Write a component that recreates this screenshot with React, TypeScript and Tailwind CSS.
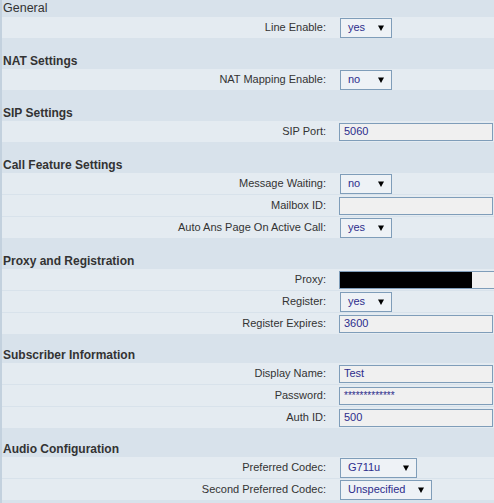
import React from "react";

type Field =
  | { label: string; kind: "select"; value: string; w: number }
  | { label: string; kind: "input"; value: string; w?: number; redact?: boolean; small?: boolean };

type Section = { title: string; spacer: number; bold: boolean; rows: Field[] };

const sections: Section[] = [
  { title: "General", spacer: 0, bold: false, rows: [{ label: "Line Enable:", kind: "select", value: "yes", w: 52 }] },
  { title: "NAT Settings", spacer: 13, bold: true, rows: [{ label: "NAT Mapping Enable:", kind: "select", value: "no", w: 52 }] },
  { title: "SIP Settings", spacer: 13, bold: true, rows: [{ label: "SIP Port:", kind: "input", value: "5060" }] },
  {
    title: "Call Feature Settings",
    spacer: 13,
    bold: true,
    rows: [
      { label: "Message Waiting:", kind: "select", value: "no", w: 52 },
      { label: "Mailbox ID:", kind: "input", value: "" },
      { label: "Auto Ans Page On Active Call:", kind: "select", value: "yes", w: 52 },
    ],
  },
  {
    title: "Proxy and Registration",
    spacer: 13,
    bold: true,
    rows: [
      { label: "Proxy:", kind: "input", value: "", w: 170, redact: true },
      { label: "Register:", kind: "select", value: "yes", w: 52 },
      { label: "Register Expires:", kind: "input", value: "3600" },
    ],
  },
  {
    title: "Subscriber Information",
    spacer: 11,
    bold: true,
    rows: [
      { label: "Display Name:", kind: "input", value: "Test" },
      { label: "Password:", kind: "input", value: "*************", small: true },
      { label: "Auth ID:", kind: "input", value: "500" },
    ],
  },
  {
    title: "Audio Configuration",
    spacer: 11,
    bold: true,
    rows: [
      { label: "Preferred Codec:", kind: "select", value: "G711u", w: 77 },
      { label: "Second Preferred Codec:", kind: "select", value: "Unspecified", w: 92 },
    ],
  },
];

function Arrow() {
  return (
    <svg width="6" height="6" viewBox="0 0 6 6" className="shrink-0">
      <polygon points="0,0.5 6,0.5 3,6" fill="#000" />
    </svg>
  );
}

function Control({ f }: { f: Field }) {
  if (f.kind === "select") {
    return (
      <div
        className="ml-[1px] flex h-[20px] items-center justify-between border border-[#7f9db9] bg-[#eef2f6] pl-[7px] pr-[7px] text-[11px] text-[#2d2d8c]"
        style={{ width: f.w }}
      >
        <span>{f.value}</span>
        <Arrow />
      </div>
    );
  }
  return (
    <div
      className="relative flex h-[18px] shrink-0 items-center border border-[#7f9db9] bg-[#f0f0f0] pl-[4px] text-[11px] text-[#2d2d8c]"
      style={{ width: f.w ?? 154 }}
    >
      {f.redact && <div className="absolute left-0 top-0 h-full w-[132px] bg-black" />}
      <span className={f.small ? "text-[10px] leading-none" : ""}>{f.value}</span>
    </div>
  );
}

export default function App() {
  return (
    <div
      className="h-[503px] w-[494px] overflow-hidden border-l-2 border-[#c3d1de] bg-[#d8e2eb] text-[#333]"
      style={{ fontFamily: '"Liberation Sans", Arial, sans-serif' }}
    >
      {sections.map((s) => (
        <div key={s.title} style={{ paddingTop: s.spacer }}>
          <div
            className={
              "flex h-[17px] items-center pl-[1px] text-[#333] " +
              (s.bold ? "text-[12px] font-bold" : "text-[12.5px] font-normal")
            }
          >
            {s.title}
          </div>
          {s.rows.map((r) => (
            <div key={r.label} className="flex h-[22px] items-center border-b border-[#d8e2eb] bg-[#e4ebf1]">
              <div className="w-[324px] shrink-0 text-right text-[11px] text-[#333]">{r.label}</div>
              <div className="ml-[13px] flex items-center">
                <Control f={r} />
              </div>
            </div>
          ))}
        </div>
      ))}
    </div>
  );
}
